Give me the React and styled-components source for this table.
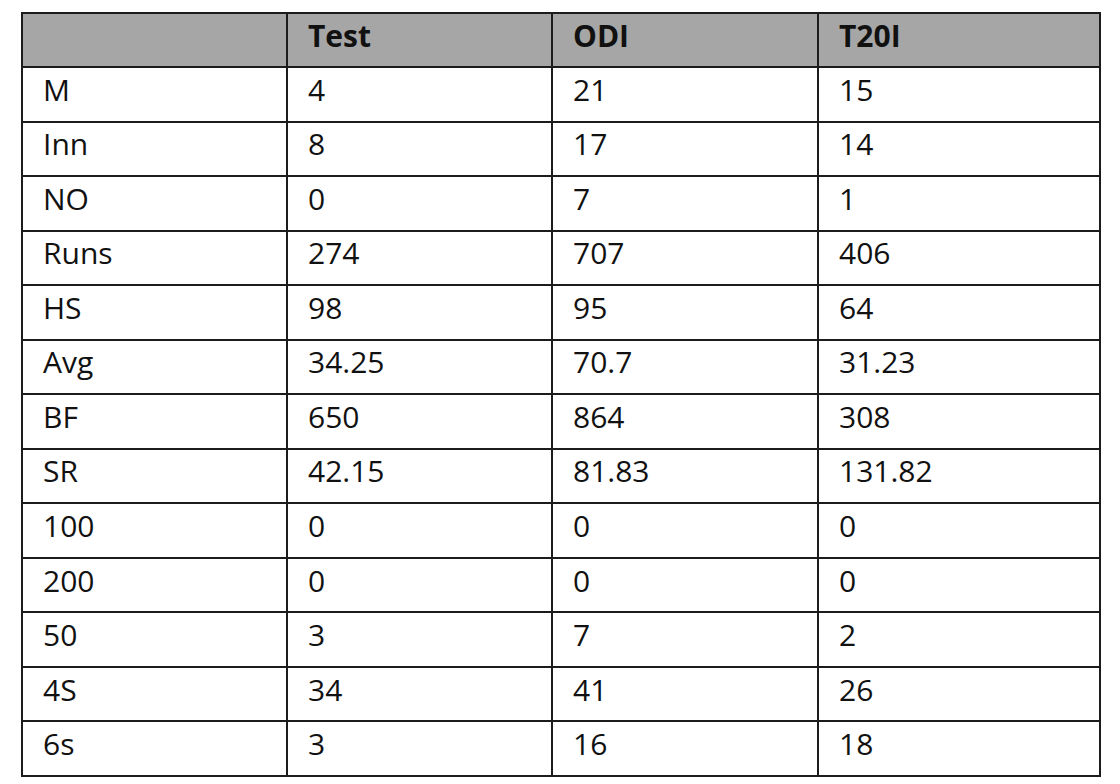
import React from "react";
import styled, { createGlobalStyle } from "styled-components";

const Global = createGlobalStyle`
  html, body { margin: 0; padding: 0; background: #ffffff; }
  body { font-family: "Open Sans", "Liberation Sans", sans-serif; color: #111; }
`;

const Page = styled.div`
  padding: 12px 0 0 21px;
`;

const Grid = styled.div`
  display: grid;
  width: 1080px;
  box-sizing: border-box;
  grid-template-columns: 265px 265px 266px 282px;
  grid-template-rows: 54px repeat(13, 54.54px);
  border-left: 2px solid #1c1c1c;
  border-top: 2px solid #1c1c1c;
`;

const Cell = styled.div`
  box-sizing: border-box;
  border-right: 2px solid #1c1c1c;
  border-bottom: 2px solid #1c1c1c;
  display: flex;
  align-items: center;
  padding: 0 0 9px 20px;
  font-size: 30px;
  line-height: 1;
  font-weight: ${(p) => (p.$head ? 700 : 400)};
  background: ${(p) => (p.$head ? "#a6a6a6" : "#ffffff")};
  color: #111;
`;

const head = ["", "Test", "ODI", "T20I"];
const rows = [
  ["M", "4", "21", "15"],
  ["Inn", "8", "17", "14"],
  ["NO", "0", "7", "1"],
  ["Runs", "274", "707", "406"],
  ["HS", "98", "95", "64"],
  ["Avg", "34.25", "70.7", "31.23"],
  ["BF", "650", "864", "308"],
  ["SR", "42.15", "81.83", "131.82"],
  ["100", "0", "0", "0"],
  ["200", "0", "0", "0"],
  ["50", "3", "7", "2"],
  ["4S", "34", "41", "26"],
  ["6s", "3", "16", "18"],
];

export default function App() {
  return (
    <>
      <Global />
      <Page>
        <Grid>
          {head.map((h, i) => (
            <Cell key={"h" + i} $head>
              {h}
            </Cell>
          ))}
          {rows.map((r, ri) =>
            r.map((c, ci) => <Cell key={ri + "-" + ci}>{c}</Cell>)
          )}
        </Grid>
      </Page>
    </>
  );
}
